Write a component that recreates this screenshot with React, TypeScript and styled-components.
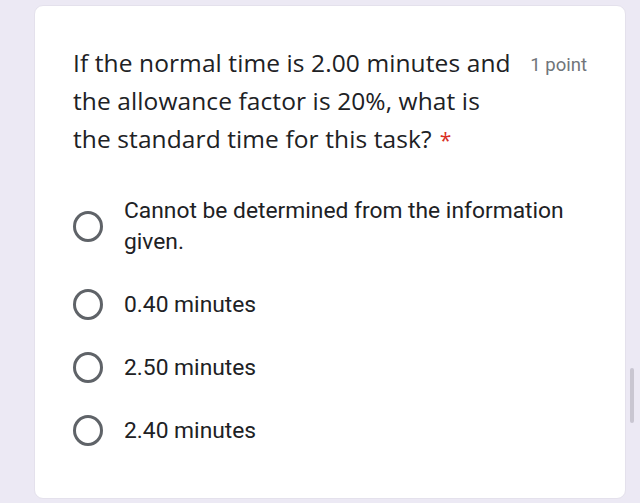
import React from "react";
import styled, { createGlobalStyle } from "styled-components";

const Global = createGlobalStyle`
  html, body { margin: 0; padding: 0; background: #ece9f4; }
  body { width: 640px; height: 503px; overflow: hidden; }
`;

const Page = styled.div`
  position: relative;
  width: 640px;
  height: 503px;
  background: #ece9f4;
  padding: 5px 14px 4px 34px;
  box-sizing: border-box;
`;

const Card = styled.div`
  height: 494px;
  width: 592px;
  box-sizing: border-box;
  background: #ffffff;
  border-radius: 9px;
  border: 1px solid #e4e1ec;
  padding: 38px 38px 0 38px;
  display: flex;
  flex-direction: column;
`;

const Header = styled.div`
  display: flex;
  align-items: flex-start;
  justify-content: space-between;
`;

const Question = styled.div`
  font-family: "Open Sans", "Noto Sans", sans-serif;
  font-size: 24.5px;
  line-height: 38px;
  color: #202124;
  width: 448px;
  letter-spacing: 0.1px;
`;

const Required = styled.span`
  color: #d93025;
  margin-left: 8px;
  font-size: 21px;
  line-height: 1;
`;

const Points = styled.div`
  font-family: "Roboto", sans-serif;
  font-size: 18.5px;
  color: #70757a;
  line-height: 38px;
  margin-top: 2px;
  white-space: nowrap;
`;

const Options = styled.div`
  display: flex;
  flex-direction: column;
  margin-top: 21px;
`;

const Option = styled.div`
  display: flex;
  align-items: center;
  gap: 21px;
  padding: 16px 0;
`;

const Radio = styled.div`
  width: 30px;
  height: 31px;
  flex: none;
  box-sizing: border-box;
  border: 3.5px solid #5f6368;
  border-radius: 50%;
`;

const Label = styled.div`
  font-family: "Roboto", sans-serif;
  font-size: 22.8px;
  line-height: 31px;
  color: #202124;
  width: 460px;
`;

const Scrollbar = styled.div`
  position: absolute;
  left: 630px;
  top: 368px;
  width: 4px;
  height: 55px;
  border-radius: 2px;
  background: #c9c6d1;
`;

const options = [
  "Cannot be determined from the information given.",
  "0.40 minutes",
  "2.50 minutes",
  "2.40 minutes",
];

export default function App() {
  return (
    <Page>
      <Global />
      <Card>
        <Header>
          <Question>
            If the normal time is 2.00 minutes and
            <br />
            the allowance factor is 20%, what is
            <br />
            the standard time for this task?
            <Required>*</Required>
          </Question>
          <Points>1 point</Points>
        </Header>
        <Options>
          {options.map((o) => (
            <Option key={o}>
              <Radio />
              <Label>{o}</Label>
            </Option>
          ))}
        </Options>
      </Card>
      <Scrollbar />
    </Page>
  );
}
